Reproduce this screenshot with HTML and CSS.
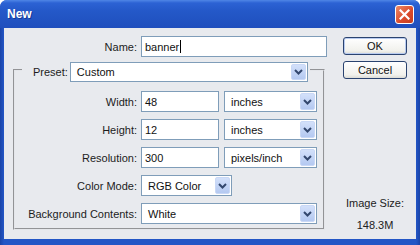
FILE: index.html
```html
<!DOCTYPE html>
<html lang="en">
<head>
  <meta charset="UTF-8" />
  <title>New</title>
  <link rel="stylesheet" href="styles.css">
</head>
<body>

<div class="window">
  <div class="titlebar">
    <span class="title">New</span>
    <span class="close">
      <svg width="11" height="11" viewBox="0 0 11 11"><path d="M1.5 1.5 L9.5 9.5 M9.5 1.5 L1.5 9.5" stroke="#fff" stroke-width="2.2" stroke-linecap="square"/></svg>
    </span>
  </div>

  <div class="content">
    <div class="main">
      <div class="row name-row">
        <label class="lbl lbl-name">Name:</label>
        <div class="field w-name">banner<span class="caret"></span></div>
      </div>

      <fieldset class="group">
        <legend class="preset">
          <label>Preset:</label>
          <div class="select w-preset"><span>Custom</span><span class="arrow"><svg width="9" height="6" viewBox="0 0 9 6"><path d="M1 1 L4.5 4.5 L8 1" fill="none" stroke="#33476e" stroke-width="2"/></svg></span></div>
        </legend>

        <div class="rows">
          <div class="row">
            <label class="lbl">Width:</label>
            <div class="field w-num">48</div>
            <div class="select w-unit"><span>inches</span><span class="arrow"><svg width="9" height="6" viewBox="0 0 9 6"><path d="M1 1 L4.5 4.5 L8 1" fill="none" stroke="#33476e" stroke-width="2"/></svg></span></div>
          </div>
          <div class="row">
            <label class="lbl">Height:</label>
            <div class="field w-num">12</div>
            <div class="select w-unit"><span>inches</span><span class="arrow"><svg width="9" height="6" viewBox="0 0 9 6"><path d="M1 1 L4.5 4.5 L8 1" fill="none" stroke="#33476e" stroke-width="2"/></svg></span></div>
          </div>
          <div class="row">
            <label class="lbl">Resolution:</label>
            <div class="field w-num">300</div>
            <div class="select w-unit"><span>pixels/inch</span><span class="arrow"><svg width="9" height="6" viewBox="0 0 9 6"><path d="M1 1 L4.5 4.5 L8 1" fill="none" stroke="#33476e" stroke-width="2"/></svg></span></div>
          </div>
          <div class="row">
            <label class="lbl">Color Mode:</label>
            <div class="select w-mode"><span>RGB Color</span><span class="arrow"><svg width="9" height="6" viewBox="0 0 9 6"><path d="M1 1 L4.5 4.5 L8 1" fill="none" stroke="#33476e" stroke-width="2"/></svg></span></div>
          </div>
          <div class="row">
            <label class="lbl">Background Contents:</label>
            <div class="select w-bg"><span>White</span><span class="arrow"><svg width="9" height="6" viewBox="0 0 9 6"><path d="M1 1 L4.5 4.5 L8 1" fill="none" stroke="#33476e" stroke-width="2"/></svg></span></div>
          </div>
        </div>
      </fieldset>
    </div>

    <div class="side">
      <div class="btn default">OK</div>
      <div class="btn">Cancel</div>
      <div class="size">
        <div>Image Size:</div>
        <div>148.3M</div>
      </div>
    </div>
  </div>
</div>

</body>
</html>
```

FILE: styles.css
```css
* {
  box-sizing: border-box;
}

body {
  margin: 0;
  font-family: 'Liberation Sans', Arial, sans-serif;
  font-size: 11px;
  color: #1c1c1c;
  background-color: #fff;
}

.window {
  width: 420px;
  height: 245px;
  display: flex;
  flex-direction: column;
  padding-bottom: 6px;
  background: linear-gradient(to right, #1a44a8, #2356c6 4px, #2356c6 calc(100% - 4px), #1a44a8);
  border-radius: 7px 7px 0 0;
  overflow: hidden;
}

.titlebar {
  height: 28px;
  flex: none;
  display: flex;
  justify-content: space-between;
  align-items: center;
  padding: 0 6px 0 7px;
  background: linear-gradient(#4f86e6 0, #2c62d4 3px, #2458c8 40%, #1f4fbd 100%);
}

.title {
  color: #fff;
  font-weight: bold;
  font-size: 12px;
  text-shadow: 1px 1px 0 #143a94;
}

.close {
  width: 19px;
  height: 19px;
  margin-top: 1px;
  display: flex;
  align-items: center;
  justify-content: center;
  border: 1px solid #fff;
  border-radius: 3px;
  background: linear-gradient(135deg, #ec8a68, #d9492a 60%, #c43d1f);
}

.content {
  flex: 1;
  margin: 0 4px;
  display: flex;
  padding: 8px 0 3px 9px;
  background-color: #e8eaee;
}

.main {
  width: 314px;
}

.row {
  display: flex;
  align-items: center;
  height: 21px;
}

.lbl {
  width: 122px;
  margin-right: 4px;
  text-align: right;
}

.lbl-name {
  width: 124px;
}

.field,
.select {
  height: 21px;
  display: flex;
  align-items: center;
  background-color: #fff;
  border: 1px solid #7f9db9;
  color: #111;
}

.field {
  padding-left: 3px;
}

.select {
  justify-content: space-between;
  padding: 1px 1px 1px 6px;
}

.select .arrow {
  width: 15px;
  height: 100%;
  display: flex;
  align-items: center;
  justify-content: center;
  background: linear-gradient(#d3e0fa, #b4c9f1);
  border: 1px solid #c9d8f6;
  border-radius: 2px;
}

.caret {
  width: 1px;
  height: 13px;
  margin-left: 1px;
  background-color: #000;
}

.w-name { width: 186px; }
.w-preset { width: 238px; height: 20px; }
.w-num { width: 78px; }
.w-unit { width: 93px; margin-left: 5px; }
.w-mode { width: 91px; }
.w-bg { width: 176px; }

.group {
  width: 312px;
  margin: 0;
  padding: 0 0 4px 0;
  border: 2px groove #e4e6ea;
}

.preset {
  display: flex;
  align-items: center;
  margin-left: 7px;
  padding: 5px 2px 0 11px;
}

.preset label {
  margin-right: 2px;
}

.rows {
  display: flex;
  flex-direction: column;
  gap: 7px;
  padding-top: 9px;
}

.side {
  width: 64px;
  margin-left: 16px;
  display: flex;
  flex-direction: column;
}

.btn {
  height: 18px;
  display: flex;
  align-items: center;
  justify-content: center;
  border: 1px solid #2a4370;
  border-radius: 3px;
  background: linear-gradient(#ffffff, #f1f1ec 80%, #dcdcd6);
  color: #111;
}

.btn.default {
  margin-top: 1px;
  box-shadow: inset 0 0 0 1px #b8cbf0;
}

.btn + .btn {
  margin-top: 6px;
}

.size {
  margin-top: auto;
  text-align: center;
  line-height: 22px;
  color: #222;
}
```
